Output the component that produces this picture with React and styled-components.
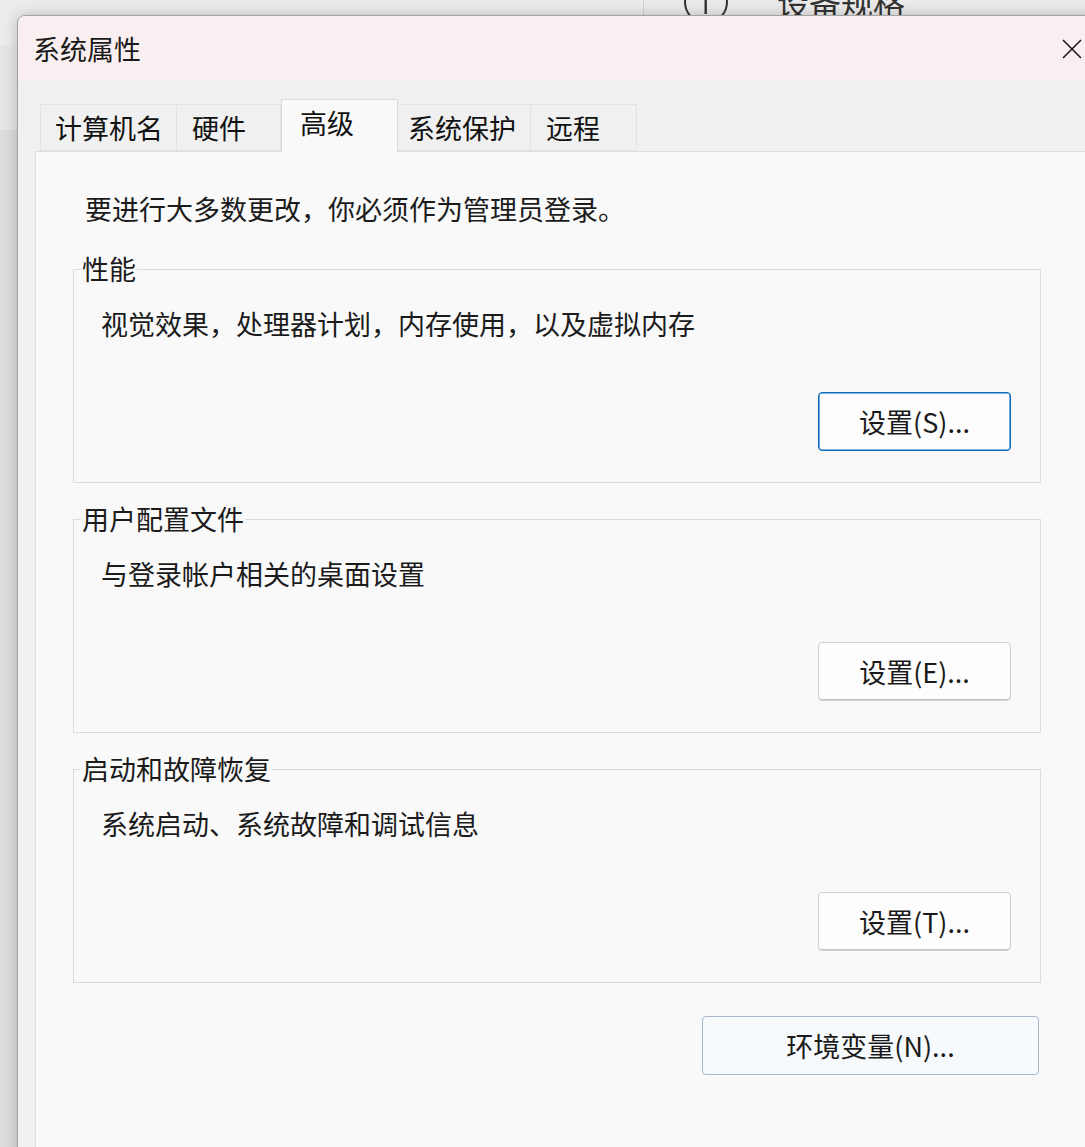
import React from 'react';
import styled, { createGlobalStyle } from 'styled-components';

const GlobalStyle = createGlobalStyle`
    html, body {
        margin: 0;
        padding: 0;
        overflow: hidden;
    }
    body {
        font-family: "Noto Sans CJK SC", "Noto Sans", sans-serif;
        color: #1b1b1b;
    }
`

const Page = styled.div`
    position: relative;
    width: 1085px;
    height: 1147px;
    overflow: hidden;
`

const Backdrop = styled.div`
    display: flex;
    height: 100%;
`

const Nav = styled.div`
    width: 643px;
    display: flex;
    flex-direction: column;
    background-color: #dcdcdc;
    border-right: 1px solid #d2d2d2;
`

const NavTop = styled.div`
    height: 130px;
    background: linear-gradient(#ececec 0, #ececec 45px, #e6e6e6 45px);
`

const Main = styled.div`
    flex: 1;
    background-color: #ebebeb;
`

const MainHeader = styled.div`
    display: flex;
    align-items: center;
    gap: 48px;
    margin-top: -18px;
    padding-left: 39px;
    height: 40px;
    font-size: 32px;
    line-height: 40px;
    color: #333;
`

const Dialog = styled.div`
    position: absolute;
    left: 17px;
    top: 15px;
    right: -30px;
    bottom: -40px;
    display: flex;
    flex-direction: column;
    border: 1px solid #a3a3a3;
    border-radius: 8px 8px 0 0;
    overflow: hidden;
    background-color: #f0f0f0;
    box-shadow: 0 0 14px rgba(0, 0, 0, 0.22);
`

const TitleBar = styled.div`
    height: 65px;
    display: flex;
    align-items: center;
    justify-content: space-between;
    padding: 0 32px 0 15px;
    background-color: #f9eff0;
`

const Title = styled.span`
    font-size: 27px;
    line-height: 36px;
    color: #1a1a1a;
`

const Body = styled.div`
    flex: 1;
    display: flex;
    flex-direction: column;
    padding: 18px 0 0 17px;
`

const TabList = styled.div`
    display: flex;
    align-items: flex-end;
    height: 52px;
    padding-left: 5px;
    position: relative;
    z-index: 1;
`

const Tab = styled.div`
    box-sizing: border-box;
    width: ${p => p.$width}px;
    height: ${p => (p.$active ? 53 : 47)}px;
    margin-bottom: ${p => (p.$active ? -1 : 0)}px;
    padding-left: ${p => p.$pad}px;
    padding-bottom: ${p => (p.$active ? 6 : 0)}px;
    display: flex;
    align-items: center;
    font-size: 27px;
    line-height: 36px;
    color: #111;
    background-color: ${p => (p.$active ? '#f9f9f9' : '#f0f0f0')};
    border: 1px solid ${p => (p.$active ? '#dadada' : '#e3e3e3')};
    border-bottom: ${p => (p.$active ? 'none' : '1px solid #e3e3e3')};
    border-left-width: ${p => (p.$first || p.$active ? 1 : 0)}px;
`

const Panel = styled.div`
    flex: 1;
    background-color: #f9f9f9;
    border-top: 1px solid #dedede;
    border-left: 1px solid #dedede;
    padding: 39px 0 0 0;
`

const Intro = styled.p`
    margin: 0 0 24px 49px;
    font-size: 27px;
    line-height: 36px;
`

const Group = styled.fieldset`
    box-sizing: border-box;
    width: 968px;
    min-width: 0;
    margin: ${p => (p.$first ? 0 : 18)}px 0 0 37px;
    padding: 0 29px 31px 7px;
    border: 1px solid #dcdcdc;
`

const Legend = styled.legend`
    padding: 0 1px;
    font-size: 27px;
    line-height: 36px;
`

const Description = styled.div`
    margin: 19px 0 0 20px;
    font-size: 27px;
    line-height: 36px;
`

const ButtonRow = styled.div`
    display: flex;
    justify-content: flex-end;
    margin-top: ${p => p.$top}px;
    width: ${p => p.$width || 'auto'};
    margin-left: ${p => p.$left || 0}px;
`

const Button = styled.button`
    box-sizing: border-box;
    width: ${p => p.$width}px;
    height: 59px;
    margin-right: ${p => p.$right || 0}px;
    font-family: inherit;
    font-size: 27px;
    line-height: 36px;
    color: #1a1a1a;
    border-radius: 4px;
    cursor: pointer;
    background-color: ${p => (p.$variant === 'hover' ? '#f7fafd' : '#fdfdfd')};
    border: 1px solid ${p =>
        p.$variant === 'default' ? '#0f6cbd' : p.$variant === 'hover' ? '#a9b8cb' : '#d0d0d0'};
    box-shadow: ${p =>
        p.$variant === 'default' ? 'inset 0 0 0 0.6px #0f6cbd' : p.$variant === 'hover' ? 'none' : 'inset 0 -1px 0 #c4c4c4'};
`

function InfoIcon() {
    return (
        <svg width="46" height="46" viewBox="0 0 46 46">
            <circle cx="23" cy="23" r="21" fill="none" stroke="#333" strokeWidth="2" />
            <rect x="21.5" y="19" width="2.4" height="16" fill="#333" />
            <circle cx="22.7" cy="13" r="1.8" fill="#333" />
        </svg>
    )
}

function CloseIcon() {
    return (
        <svg width="20" height="20" viewBox="0 0 20 20">
            <path d="M1 1 L19 19 M19 1 L1 19" stroke="#1a1a1a" strokeWidth="1.6" fill="none" />
        </svg>
    )
}

const tabs = [
    { label: '计算机名', width: 137, pad: 14 },
    { label: '硬件', width: 104, pad: 15 },
    { label: '高级', width: 117, pad: 18, active: true },
    { label: '系统保护', width: 133, pad: 10 },
    { label: '远程', width: 106, pad: 15 },
]

const groups = [
    { title: '性能', text: '视觉效果，处理器计划，内存使用，以及虚拟内存', button: '设置(S)...', variant: 'default' },
    { title: '用户配置文件', text: '与登录帐户相关的桌面设置', button: '设置(E)...' },
    { title: '启动和故障恢复', text: '系统启动、系统故障和调试信息', button: '设置(T)...' },
]

export default function App() {
    return (
        <Page>
            <GlobalStyle />
            <Backdrop>
                <Nav>
                    <NavTop />
                </Nav>
                <Main>
                    <MainHeader>
                        <InfoIcon />
                        <span>设备规格</span>
                    </MainHeader>
                </Main>
            </Backdrop>

            <Dialog>
                <TitleBar>
                    <Title>系统属性</Title>
                    <CloseIcon />
                </TitleBar>
                <Body>
                    <TabList>
                        {tabs.map((t, i) => (
                            <Tab key={t.label} $width={t.width} $pad={t.pad} $active={t.active} $first={i === 0}>
                                {t.label}
                            </Tab>
                        ))}
                    </TabList>
                    <Panel>
                        <Intro>要进行大多数更改，你必须作为管理员登录。</Intro>
                        {groups.map((g, i) => (
                            <Group key={g.title} $first={i === 0}>
                                <Legend>{g.title}</Legend>
                                <Description>{g.text}</Description>
                                <ButtonRow $top={50}>
                                    <Button $width={193} $variant={g.variant}>{g.button}</Button>
                                </ButtonRow>
                            </Group>
                        ))}
                        <ButtonRow $top={33} $width="968px" $left={37}>
                            <Button $width={337} $right={2} $variant="hover">环境变量(N)...</Button>
                        </ButtonRow>
                    </Panel>
                </Body>
            </Dialog>
        </Page>
    )
}
